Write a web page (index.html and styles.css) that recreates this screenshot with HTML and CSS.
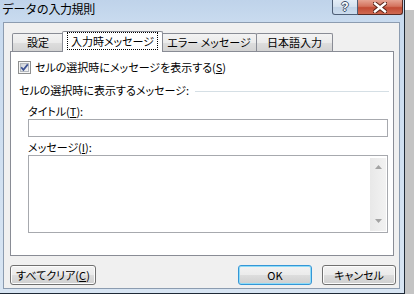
FILE: index.html
```html
<!DOCTYPE html>
<html lang="ja">
<head>
<meta charset="utf-8">
<title>データの入力規則</title>
<link rel="stylesheet" href="styles.css">
</head>
<body>
<div class="window">
  <div class="titlebar">
    <div class="title">データの入力規則</div>
    <div class="caption-buttons">
      <div class="cap-btn help"><span>?</span></div>
      <div class="cap-btn close">
        <svg width="14" height="11" viewBox="0 0 14 11">
          <path d="M2 1.5 L12 9.5 M12 1.5 L2 9.5" fill="none" stroke="#5a2318" stroke-width="4.4" stroke-linecap="square"/>
          <path d="M2 1.5 L12 9.5 M12 1.5 L2 9.5" fill="none" stroke="#ffffff" stroke-width="2.4" stroke-linecap="square"/>
        </svg>
      </div>
    </div>
  </div>
  <div class="client">
    <div class="tabs">
      <div class="tab t1">設定</div>
      <div class="tab t2 active"><span class="focus">入力時メッセージ</span></div>
      <div class="tab t3">エラー メッセージ</div>
      <div class="tab t4">日本語入力</div>
    </div>
    <div class="panel">
      <div class="check-row">
        <span class="checkbox">
          <svg width="13" height="13" viewBox="0 0 13 13">
            <defs>
              <linearGradient id="cbg" x1="0" y1="0" x2="1" y2="1">
                <stop offset="0" stop-color="#cbcfd5"/>
                <stop offset="1" stop-color="#f7f7f7"/>
              </linearGradient>
            </defs>
            <rect x="0.5" y="0.5" width="12" height="12" fill="#f6f6f6" stroke="#8e8f8f"/>
            <rect x="2.5" y="2.5" width="8" height="8" fill="url(#cbg)" stroke="#b3b8be"/>
            <path d="M3.2 6.2 L5.4 8.8 L9.8 3.4" fill="none" stroke="#3d5294" stroke-width="1.7"/>
          </svg>
        </span>
        <span class="check-label">セルの選択時にメッセージを表示する(<u>S</u>)</span>
      </div>
      <div class="group">
        <span class="group-label">セルの選択時に表示するメッセージ:</span>
        <span class="group-line"></span>
      </div>
      <div class="field-label first">タイトル(<u>T</u>):</div>
      <div class="input"></div>
      <div class="field-label second">メッセージ(<u>I</u>):</div>
      <div class="textarea">
        <div class="scrollbar">
          <svg class="arrow" width="7" height="4" viewBox="0 0 7 4"><polygon points="0,4 3.5,0 7,4" fill="#a3a3a3"/></svg>
          <svg class="arrow" width="7" height="4" viewBox="0 0 7 4"><polygon points="0,0 7,0 3.5,4" fill="#a3a3a3"/></svg>
        </div>
      </div>
    </div>
    <div class="buttons">
      <div class="btn clear">すべてクリア(<u>C</u>)</div>
      <div class="btn ok">OK</div>
      <div class="btn cancel">キャンセル</div>
    </div>
  </div>
</div>
</body>
</html>
```

FILE: styles.css
```css
* { box-sizing: border-box; }
html, body { margin: 0; padding: 0; background: #ffffff; }
body {
  font-family: "Noto Sans CJK JP", "Noto Sans", sans-serif;
  font-size: 11px;
  color: #000000;
  font-feature-settings: "palt" 1;
  white-space: nowrap;
}

.window {
  width: 405px;
  height: 294px;
  border-right: 1px solid #1f2a37;
  border-bottom: 1px solid #1f2a37;
  background: linear-gradient(to bottom, #bfd3ea 0px, #c9dbef 22px, #d8e5f3 100%);
  box-shadow: 10px 10px 0 #c4c4c4;
  display: flex;
  flex-direction: column;
}

.titlebar {
  height: 22px;
  display: flex;
  align-items: flex-start;
  padding-left: 2px;
}
.title {
  font-size: 12px;
  font-feature-settings: normal;
  letter-spacing: -0.4px;
  line-height: 17px;
  height: 17px;
}
.caption-buttons {
  margin-left: auto;
  margin-right: 1px;
  display: flex;
}
.cap-btn {
  height: 15px;
  display: flex;
  align-items: center;
  justify-content: center;
  border: 1px solid #4e5e76;
  border-top: none;
}
.help {
  width: 26px;
  border-radius: 0 0 0 3px;
  background: linear-gradient(to bottom, #e4edf7 0%, #d3e0ee 50%, #c2d3e7 51%, #ccdcee 100%);
}
.help span {
  font-family: "Liberation Sans", sans-serif;
  font-weight: bold;
  font-size: 12px;
  line-height: 13px;
  color: #ffffff;
  text-shadow: 1px 0 #3e4f68, -1px 0 #3e4f68, 0 1px #3e4f68, 0 -1px #3e4f68;
}
.close {
  width: 45px;
  border-color: #5a2a22;
  border-left: none;
  border-radius: 0 0 3px 0;
  background: linear-gradient(to bottom, #e6a393 0%, #d4735e 45%, #c24a34 55%, #cf6a52 100%);
}

.client {
  flex: 1;
  margin: 0 4px 4px 3px;
  border: 1px solid #8c9cb0;
  background: #f0f0f0;
  display: flex;
  flex-direction: column;
}

.tabs {
  height: 29px;
  margin: 0 5px -1px 6px;
  padding-left: 2px;
  display: flex;
  align-items: flex-end;
  position: relative;
  z-index: 1;
}
.tab {
  height: 18px;
  margin-bottom: 1px;
  border: 1px solid #898c95;
  border-bottom: none;
  border-radius: 2px 2px 0 0;
  background: linear-gradient(to bottom, #f3f3f3 0%, #ebebeb 50%, #dedede 51%, #d3d3d3 100%);
  display: flex;
  align-items: center;
  justify-content: center;
  line-height: 15px;
}
.t1 { width: 52px; }
.t2 { width: 101px; margin-left: -2px; margin-right: -2px; }
.t3 { width: 96px; }
.t4 { width: 77px; margin-left: -1px; }
.tab.active {
  height: 21px;
  margin-bottom: 0;
  background: #ffffff;
  align-items: flex-start;
  justify-content: flex-start;
  padding-left: 4px;
  position: relative;
  z-index: 2;
}
.focus {
  width: 91px;
  height: 18px;
  border: 1px dotted #000000;
  display: flex;
  align-items: center;
  justify-content: center;
}

.panel {
  height: 205px;
  margin: 0 5px 0 6px;
  border: 1px solid #898c95;
  background: #ffffff;
  padding-top: 8px;
  display: flex;
  flex-direction: column;
}

.check-row {
  height: 15px;
  display: flex;
  align-items: center;
  padding-left: 7px;
}
.checkbox { width: 13px; height: 13px; display: block; }
.checkbox svg { display: block; }
.check-label { margin-left: 4px; line-height: 15px; }

.group {
  height: 15px;
  margin-top: 8px;
  padding-left: 8px;
  display: flex;
  align-items: flex-start;
}
.group-label { line-height: 15px; }
.group-line {
  flex: 1;
  height: 1px;
  margin: 8px 4px 0 6px;
  background: #d5dfe5;
}

.field-label {
  height: 15px;
  line-height: 15px;
  margin-left: 17px;
}
.field-label.first { margin-top: 6px; }
.field-label.second { margin-top: 3px; }

.input {
  height: 18px;
  margin: 0 5px 0 17px;
  border: 1px solid #a7a9ae;
  background: #ffffff;
}

.textarea {
  height: 78px;
  margin: 0 5px 0 17px;
  border: 1px solid #a7a9ae;
  background: #ffffff;
  padding: 2px 1px 1px 0;
  display: flex;
  justify-content: flex-end;
}
.scrollbar {
  width: 16px;
  background: linear-gradient(to right, #e8e8e8, #f2f2f2);
  display: flex;
  flex-direction: column;
  align-items: center;
  justify-content: space-between;
  padding: 7px 0 8px 0;
}
.arrow { display: block; }

.buttons {
  height: 20px;
  margin-top: 9px;
  padding: 0 3px 0 6px;
  display: flex;
}
.btn {
  height: 20px;
  border: 1px solid #707070;
  border-radius: 3px;
  background: linear-gradient(to bottom, #f2f2f2 0%, #ebebeb 50%, #dddddd 51%, #cfcfcf 100%);
  box-shadow: inset 0 0 0 1px #fcfcfc;
  display: flex;
  align-items: center;
  justify-content: center;
  line-height: 15px;
}
.clear { width: 86px; }
.ok {
  width: 74px;
  margin-left: auto;
  border-color: #3596d6;
  box-shadow: inset 0 0 0 1px #8fdcf8;
}
.cancel { width: 74px; margin-left: 10px; }
```
